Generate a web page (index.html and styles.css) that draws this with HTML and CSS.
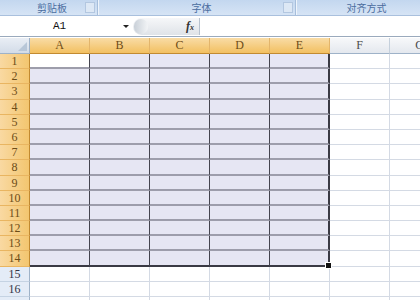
FILE: index.html
```html
<!DOCTYPE html>
<html>
<head>
    <title>Sheet</title>
    <link rel="stylesheet" href="styles.css">
</head>
<body>
    <div class="ribbon">
        <div class="group g1"><span>剪贴板</span><i class="launch"></i></div>
        <div class="group g2"><span>字体</span><i class="launch"></i></div>
        <div class="group g3"><span>对齐方式</span></div>
    </div>

    <div class="formula-bar">
        <div class="name-box">A1<i class="arrow"></i></div>
        <div class="fx-box"><b class="knob"></b><em>f<small>x</small></em></div>
        <div class="input"></div>
    </div>

    <div class="sheet">
        <div class="row head">
            <div class="corner"><i></i></div>
            <div class="ch on">A</div><div class="ch on">B</div><div class="ch on">C</div><div class="ch on">D</div><div class="ch on">E</div>
            <div class="ch">F</div><div class="ch">G</div>
        </div>
        <div class="row"><div class="rh on">1</div><div class="c s act"></div><div class="c s"></div><div class="c s"></div><div class="c s"></div><div class="c s e"></div><div class="c"></div><div class="c"></div></div>
        <div class="row"><div class="rh on">2</div><div class="c s"></div><div class="c s"></div><div class="c s"></div><div class="c s"></div><div class="c s e"></div><div class="c"></div><div class="c"></div></div>
        <div class="row"><div class="rh on">3</div><div class="c s"></div><div class="c s"></div><div class="c s"></div><div class="c s"></div><div class="c s e"></div><div class="c"></div><div class="c"></div></div>
        <div class="row"><div class="rh on">4</div><div class="c s"></div><div class="c s"></div><div class="c s"></div><div class="c s"></div><div class="c s e"></div><div class="c"></div><div class="c"></div></div>
        <div class="row"><div class="rh on">5</div><div class="c s"></div><div class="c s"></div><div class="c s"></div><div class="c s"></div><div class="c s e"></div><div class="c"></div><div class="c"></div></div>
        <div class="row"><div class="rh on">6</div><div class="c s"></div><div class="c s"></div><div class="c s"></div><div class="c s"></div><div class="c s e"></div><div class="c"></div><div class="c"></div></div>
        <div class="row"><div class="rh on">7</div><div class="c s"></div><div class="c s"></div><div class="c s"></div><div class="c s"></div><div class="c s e"></div><div class="c"></div><div class="c"></div></div>
        <div class="row"><div class="rh on">8</div><div class="c s"></div><div class="c s"></div><div class="c s"></div><div class="c s"></div><div class="c s e"></div><div class="c"></div><div class="c"></div></div>
        <div class="row"><div class="rh on">9</div><div class="c s"></div><div class="c s"></div><div class="c s"></div><div class="c s"></div><div class="c s e"></div><div class="c"></div><div class="c"></div></div>
        <div class="row"><div class="rh on">10</div><div class="c s"></div><div class="c s"></div><div class="c s"></div><div class="c s"></div><div class="c s e"></div><div class="c"></div><div class="c"></div></div>
        <div class="row"><div class="rh on">11</div><div class="c s"></div><div class="c s"></div><div class="c s"></div><div class="c s"></div><div class="c s e"></div><div class="c"></div><div class="c"></div></div>
        <div class="row"><div class="rh on">12</div><div class="c s"></div><div class="c s"></div><div class="c s"></div><div class="c s"></div><div class="c s e"></div><div class="c"></div><div class="c"></div></div>
        <div class="row"><div class="rh on">13</div><div class="c s"></div><div class="c s"></div><div class="c s"></div><div class="c s"></div><div class="c s e"></div><div class="c"></div><div class="c"></div></div>
        <div class="row"><div class="rh on">14</div><div class="c s b"></div><div class="c s b"></div><div class="c s b"></div><div class="c s b"></div><div class="c s b e"><i class="handle"></i></div><div class="c"></div><div class="c"></div></div>
        <div class="row"><div class="rh">15</div><div class="c"></div><div class="c"></div><div class="c"></div><div class="c"></div><div class="c"></div><div class="c"></div><div class="c"></div></div>
        <div class="row"><div class="rh">16</div><div class="c"></div><div class="c"></div><div class="c"></div><div class="c"></div><div class="c"></div><div class="c"></div><div class="c"></div></div>
        <div class="row"><div class="rh">17</div><div class="c"></div><div class="c"></div><div class="c"></div><div class="c"></div><div class="c"></div><div class="c"></div><div class="c"></div></div>
    </div>
</body>
</html>
```

FILE: styles.css
```css
body {
    margin: 0;
    width: 420px;
    height: 300px;
    overflow: hidden;
    background-color: #ffffff;
    font-family: "Liberation Serif", "Noto Sans CJK SC", serif;
}

/* ribbon group labels */
.ribbon {
    display: flex;
    height: 15px;
    background: linear-gradient(#c3d7ef, #d6e4f5);
    border-bottom: 1px solid #a9c0dd;
}

.group {
    position: relative;
    flex-shrink: 0;
    display: flex;
    justify-content: center;
    align-items: center;
    font-family: "Noto Sans CJK SC", sans-serif;
    font-size: 10px;
    color: #4a6d9f;
    border-right: 1px solid #eef4fb;
    box-shadow: inset -1px 0 0 #a6bedb;
    box-sizing: border-box;
}

.g1 { width: 99px; padding-left: 6px; }
.g2 { width: 196px; margin-left: 2px; padding-left: 6px; }
.g3 { width: 136px; margin-left: 2px; }

.launch {
    position: absolute;
    right: 3px;
    top: 2px;
    width: 8px;
    height: 9px;
    border: 1px solid #b3c7e0;
    background: #dde8f5;
}

.formula-bar {
    display: flex;
    height: 20px;
    border-bottom: 1px solid #9aaabd;
    background: #ffffff;
}

.name-box {
    position: relative;
    width: 133px;
    text-align: center;
    line-height: 21px;
    font-family: "Liberation Mono", monospace;
    font-size: 11px;
    color: #111;
    padding-right: 14px;
    box-sizing: border-box;
}

.arrow {
    position: absolute;
    right: 4px;
    top: 9px;
    border-left: 3px solid transparent;
    border-right: 3px solid transparent;
    border-top: 3px solid #222;
}

.fx-box {
    position: relative;
    width: 66px;
    margin: 2px 0 1px;
    border-radius: 9px 0 0 9px;
    background: linear-gradient(#f6f7f9, #dfe3e8);
    border-right: 1px solid #b7c2cf;
}

.knob {
    position: absolute;
    left: 1px;
    top: 1px;
    width: 14px;
    height: 15px;
    border-radius: 8px;
    background: linear-gradient(90deg, #c9d0d8, #f2f4f6);
}

.fx-box em {
    position: absolute;
    right: 5px;
    top: 0;
    font-size: 12px;
    font-weight: bold;
    color: #333;
    line-height: 17px;
}

.fx-box small {
    font-size: 8px;
}

.input {
    flex: 1;
}

/* sheet grid */
.sheet {
    border-top: 1px solid #ffffff;
}

.row {
    display: grid;
    grid-template-columns: 30px repeat(7, 60px);
    height: 15.2px;
}

.row.head {
    height: 16px;
}

.row > div {
    box-sizing: border-box;
    border-right: 1px solid #d4dae4;
    border-bottom: 1px solid #d4dae4;
}

.corner {
    position: relative;
    background: linear-gradient(#e9eef5, #d3dce8);
    border-color: #9eb2c8 !important;
}

.corner i {
    position: absolute;
    right: 2px;
    bottom: 2px;
    border-left: 9px solid transparent;
    border-bottom: 9px solid #b8c7d8;
}

.ch, .rh {
    font-size: 12px;
    text-align: center;
    color: #4b4b4b;
    line-height: 15px;
}

.ch {
    background: linear-gradient(#f7f8fa, #e4e8ee);
    border-right-color: #c5d0dc !important;
    border-bottom-color: #9eb2c8 !important;
}

.ch.on {
    background: linear-gradient(#f9dca6, #f2c061);
    color: #6d4c17;
    border-right-color: #e3b56b !important;
    border-bottom-color: #c28a30 !important;
}

.rh {
    background: #e4ecf7;
    color: #334;
    line-height: 14px;
    border-right-color: #9eb2c8 !important;
    border-bottom-color: #c5d3e3 !important;
}

.rh.on {
    background: linear-gradient(90deg, #f9d9a2, #f3c66f);
    color: #6d4c17;
    border-right-color: #c28a30 !important;
    border-bottom-color: #e9b561 !important;
}

.c.s {
    background: #e6e6f3;
    border-right: 1px solid #44444f;
    border-bottom: 2px solid #9d9dab;
}

.c.s.act {
    background: #ffffff;
}

.c.s.e {
    border-right: 2px solid #3a3a44;
}

.c.s.b {
    border-bottom: 2px solid #3a3a44;
}

.c.s.e.b {
    position: relative;
}

.handle {
    position: absolute;
    right: -4px;
    bottom: -4px;
    width: 5px;
    height: 5px;
    background: #111;
    border: 1px solid #fff;
}
```
